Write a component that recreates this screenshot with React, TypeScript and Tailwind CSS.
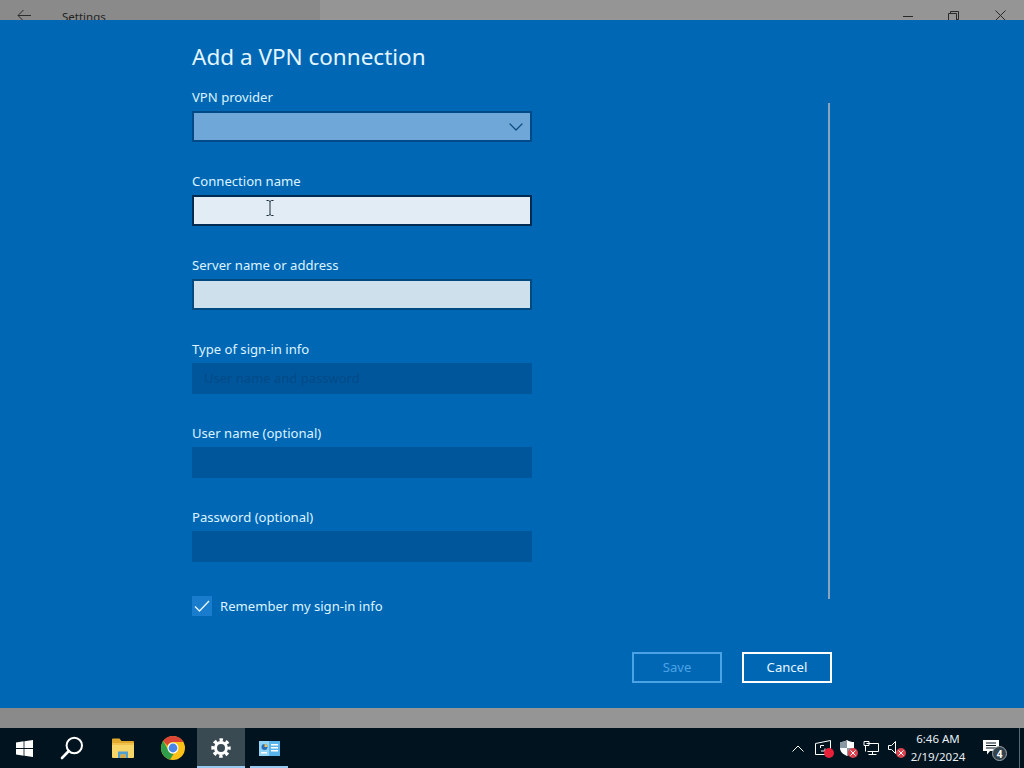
import { ChevronDown } from "lucide-react";

const uiFont = { fontFamily: '"Noto Sans", "Open Sans", sans-serif' };

function Field({
  label,
  boxClass,
  children,
}: {
  label: string;
  boxClass: string;
  children?: React.ReactNode;
}) {
  return (
    <div className="w-[340px]">
      <div className="h-5 text-[13.1px] leading-5 text-[#dcf3ff]">{label}</div>
      <div className={`relative mt-[4px] h-[31px] ${boxClass}`}>{children}</div>
    </div>
  );
}

function IBeam() {
  return (
    <svg className="absolute left-[71px] top-[2px]" width="10" height="18" viewBox="0 0 10 18" fill="none" stroke="#1c2c3a" strokeWidth="1">
      <path d="M1.5 1.5h2l1.5 1 1.5-1h2M5 2.5v13M1.5 16.5h2l1.5-1 1.5 1h2" />
    </svg>
  );
}

function WindowsLogo() {
  return (
    <svg width="17" height="17" viewBox="0 0 17 17" fill="#ffffff">
      <path d="M0 2.4 7.6 1.3v6.8H0zM8.4 1.2 17 0v8.1H8.4zM0 8.9h7.6v6.8L0 14.6zM8.4 8.9H17V17l-8.6-1.2z" />
    </svg>
  );
}

function SearchIcon() {
  return (
    <svg width="24" height="24" viewBox="0 0 24 24" fill="none" stroke="#ffffff">
      <circle cx="14.3" cy="9.5" r="7.7" strokeWidth="2" />
      <path d="M8.8 15 2 22" strokeWidth="2.6" strokeLinecap="round" />
    </svg>
  );
}

function FolderIcon() {
  return (
    <svg width="22" height="20" viewBox="0 0 22 20">
      <path d="M0 1.5A1 1 0 0 1 1 .5h6.5l2 2.5H21a1 1 0 0 1 1 1V6H0z" fill="#e0a92e" />
      <path d="M0 5h22v14a1 1 0 0 1-1 1H1a1 1 0 0 1-1-1z" fill="#f7d566" />
      <path d="M0 5h22v2H0z" fill="#f0c24b" />
      <path d="M6 20v-6.5h10V20h-2.500v-3.500h-5V20z" fill="#4f9fd0" />
      <path d="M8.500 16.500h5V20h-5z" fill="#d9a53a" />
    </svg>
  );
}

function ChromeIcon() {
  return (
    <svg width="24" height="24" viewBox="0 0 24 24">
      <circle cx="12" cy="12" r="12" fill="#fbc116" />
      <path d="M12 0a12 12 0 0 1 10.400 6H12a6 6 0 0 0-5.600 3.800L2.300 4.900A12 12 0 0 1 12 0z" fill="#db4437" />
      <path d="M2.300 4.900 7 13.500a6 6 0 0 0 5.600 4.400L9 23.600A12 12 0 0 1 2.300 4.900z" fill="#2f9e4a" />
      <circle cx="12" cy="12" r="5.500" fill="#ffffff" />
      <circle cx="12" cy="12" r="4.400" fill="#4a86e8" />
    </svg>
  );
}

function GearIcon() {
  return (
    <svg width="20" height="20" viewBox="0 0 20 20" fill="none" stroke="#ffffff">
      <circle cx="10" cy="10" r="5.500" strokeWidth="3" />
      <circle cx="10" cy="10" r="8" strokeWidth="3.400" strokeDasharray="3.400 2.880" strokeDashoffset="1.700" />
    </svg>
  );
}

function ControlPanelIcon() {
  return (
    <svg width="21" height="15" viewBox="0 0 21 15">
      <path d="M0 0h21v15H0z" fill="#58b4ea" />
      <path d="M0 0h10v15H0z" fill="#8fd3f5" />
      <circle cx="5.500" cy="6" r="3" fill="#2a6fb5" />
      <path d="M5.500 6V3a3 3 0 0 1 3 3z" fill="#f2c04e" />
      <path d="M12 3h7v1.500h-7zM12 6h7v1.500h-7zM12 9h7v1.500h-7z" fill="#ffffff" />
      <path d="M2 11h6v1.500H2z" fill="#ffffff" />
    </svg>
  );
}

function TrayBadge({ color, cross }: { color: string; cross?: boolean }) {
  return (
    <span className={`absolute -bottom-[2px] -right-[3px] flex h-[10px] w-[10px] items-center justify-center rounded-full ${color}`}>
      {cross && (
        <svg width="6" height="6" viewBox="0 0 6 6" stroke="#ffffff" strokeWidth="1">
          <path d="m.5.500 5 5m0-5-5 5" />
        </svg>
      )}
    </span>
  );
}

function TrayIcon({ children, badge }: { children: React.ReactNode; badge?: React.ReactNode }) {
  return (
    <div className="flex w-6 items-center justify-center">
      <div className="relative flex h-4 w-4 items-center justify-center">
        {children}
        {badge}
      </div>
    </div>
  );
}

function TaskButton({
  children,
  active,
  underline,
}: {
  children: React.ReactNode;
  active?: boolean;
  underline?: string;
}) {
  return (
    <div className={`relative flex h-10 w-[48px] items-center justify-center ${active ? "bg-[#3a4a52]" : ""}`}>
      {children}
      {underline && <div className={`absolute bottom-0 h-[2px] bg-[#99c9ee] ${underline}`} />}
    </div>
  );
}

export default function App() {
  return (
    <div className="flex h-[768px] w-[1024px] flex-col overflow-hidden bg-[#00131f]" style={uiFont}>
      {/* settings window behind the dialog */}
      <div className="flex h-5 shrink-0 overflow-hidden bg-[#959595]">
        <div className="flex h-5 w-[320px] items-start bg-[#8a8a8a]">
          <svg className="ml-[17px] mt-[9px] shrink-0" width="14" height="13" viewBox="0 0 14 13" fill="none" stroke="#2d2d2d" strokeWidth="1">
            <path d="M14 6.500H1M6.500 1 1 6.500 6.500 12" />
          </svg>
          <span className="ml-[31px] mt-[8px] text-[11.5px] leading-[18px] text-[#222222]">Settings</span>
        </div>
        <div className="flex flex-1 items-start justify-end">
          <div className="mr-[35px] mt-[16px] h-px w-[10px] bg-[#2a2a2a]" />
          <svg className="mr-[36px] mt-[11px]" width="11" height="11" viewBox="0 0 11 11" fill="none" stroke="#2a2a2a" strokeWidth="1">
            <path d="M.500 2.500h8v8h-8zM2.500 2.500v-2h8v8h-2" />
          </svg>
          <svg className="mr-[18px] mt-[10px]" width="11" height="11" viewBox="0 0 11 11" fill="none" stroke="#2a2a2a" strokeWidth="1">
            <path d="m.500.500 10 10m0-10-10 10" />
          </svg>
        </div>
      </div>

      {/* dialog */}
      <div className="flex h-[688px] shrink-0 bg-[#0067b5] pl-[192px] pt-5">
        <div className="flex w-[640px] flex-col">
          <div className="h-8 pt-px text-[22.5px] leading-8 text-[#e3f5ff]">Add a VPN connection</div>
          <div className="flex flex-1">
            <div className="flex w-[636px] flex-col">
              <div className="mt-[15px] flex flex-col gap-[29px]">
                <Field label="VPN provider" boxClass="border-2 border-[#004a87] bg-[#6fa7d8]">
                  <ChevronDown className="absolute right-[2px] top-[2px] text-[#0c4a80]" size={24} strokeWidth={1.2} />
                </Field>
                <Field label="Connection name" boxClass="border-2 border-[#012b50] bg-[#e2ecf5]">
                  <IBeam />
                </Field>
                <Field label="Server name or address" boxClass="border-2 border-[#014a80] bg-[#cde0ec]" />
                <Field label="Type of sign-in info" boxClass="bg-[#00569b] pl-3 text-[13px] leading-[31px] text-[#004a87]">
                  User name and password
                </Field>
                <Field label="User name (optional)" boxClass="bg-[#00569b]" />
                <Field label="Password (optional)" boxClass="bg-[#00569b]" />
              </div>
              <div className="mt-[34px] flex items-center gap-2">
                <div className="flex h-5 w-5 items-center justify-center bg-[#1a7ccc]">
                  <svg width="16" height="12" viewBox="0 0 16 12" fill="none" stroke="#e6f6ff" strokeWidth="1.400">
                    <path d="m1 6.500 4.500 4.500L15 1" />
                  </svg>
                </div>
                <span className="text-[13.1px] leading-5 text-[#dcf3ff]">Remember my sign-in info</span>
              </div>
            </div>
            <div className="mt-[31px] h-[496px] w-[2px] bg-[#8aa5bb]" />
          </div>
          <div className="mb-[25px] flex justify-end gap-5">
            <div className="flex h-[31px] w-[90px] items-center justify-center border-2 border-[#4ba3e6] pt-px text-[13.1px] text-[#4ba3e6]">Save</div>
            <div className="flex h-[31px] w-[90px] items-center justify-center border-2 border-[#ffffff] pt-px text-[13.1px] text-[#e6f7ff]">Cancel</div>
          </div>
        </div>
      </div>

      <div className="flex h-5 shrink-0 bg-[#959595]">
        <div className="w-[320px] bg-[#8a8a8a]" />
      </div>

      {/* taskbar */}
      <div className="flex h-10 shrink-0 items-center bg-[#00131f]">
        <TaskButton><WindowsLogo /></TaskButton>
        <TaskButton><SearchIcon /></TaskButton>
        <div className="flex w-[101px]">
          <div className="flex h-10 w-[53px] items-center justify-center"><FolderIcon /></div>
          <TaskButton><ChromeIcon /></TaskButton>
        </div>
        <TaskButton active underline="inset-x-0"><GearIcon /></TaskButton>
        <TaskButton underline="inset-x-[5px]"><ControlPanelIcon /></TaskButton>

        <div className="ml-auto flex items-center">
          <svg className="mr-[7px]" width="12" height="7" viewBox="0 0 12 7" fill="none" stroke="#ffffff" strokeWidth="1">
            <path d="m.500 6.500 5.500-5.500 5.500 5.500" />
          </svg>
          <TrayIcon badge={<TrayBadge color="bg-[#e8213a]" />}>
            <svg width="16" height="16" viewBox="0 0 16 16" fill="none" stroke="#ffffff" strokeWidth="1">
              <path d="M.500 3.500 15.500.500V14.500H.500zM9 5.500H5.500v2.500M6 11h4V8.500" />
            </svg>
          </TrayIcon>
          <TrayIcon badge={<TrayBadge color="bg-[#d8434f]" cross />}>
            <svg width="14" height="16" viewBox="0 0 14 16">
              <path d="M7 0c2 1.500 4.500 2 7 2v6c0 3.500-3 6.500-7 8-4-1.500-7-4.500-7-8V2c2.500 0 5-.5 7-2z" fill="#ffffff" />
              <path d="M7 0v8H0V2c2.500 0 5-.5 7-2zM7 8h7c0 3.500-3 6.500-7 8z" fill="#8a98a3" />
            </svg>
          </TrayIcon>
          <TrayIcon>
            <svg width="16" height="16" viewBox="0 0 16 16" fill="none" stroke="#ffffff" strokeWidth="1">
              <path d="M3.500 3.500h12v8h-11M1 1.500h5v4H1zM9.500 11.500v3M5.500 14.500h8M2.500 5.500v6" />
            </svg>
          </TrayIcon>
          <TrayIcon badge={<TrayBadge color="bg-[#d8434f]" cross />}>
            <svg width="14" height="14" viewBox="0 0 14 14" fill="none" stroke="#ffffff" strokeWidth="1">
              <path d="M.500 4.500h3l4-4v12l-4-4h-3z" />
            </svg>
          </TrayIcon>
          <div className="ml-[3px] flex w-[56px] flex-col items-center text-[11.5px] leading-[18px] text-[#e8eef2]">
            <span>6:46 AM</span>
            <span>2/19/2024</span>
          </div>
          <div className="relative ml-[7px] flex h-10 w-[40px] items-center justify-center">
            <svg className="-translate-x-[2px] -translate-y-[1px]" width="16" height="15" viewBox="0 0 16 15">
              <path d="M0 0h16v11H7l-3 3.500V11H0z" fill="#ffffff" />
              <path d="M3 3h10M3 5.500h10M3 8h10" stroke="#00131f" strokeWidth="1" />
            </svg>
            <span className="absolute bottom-[7px] right-[6px] flex h-[15px] w-[15px] items-center justify-center rounded-full border border-[#9aa5ab] bg-[#33424b] text-[10px] font-bold leading-none text-white">4</span>
          </div>
          <div className="ml-[6px] mr-[4px] h-10 w-px bg-[#5a6870]" />
        </div>
      </div>
    </div>
  );
}
